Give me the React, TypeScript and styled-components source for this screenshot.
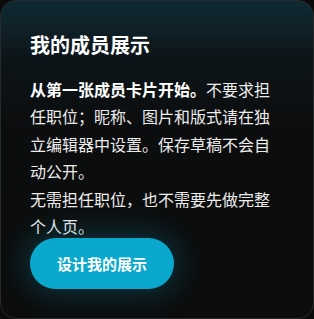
import React from "react";
import styled, { createGlobalStyle } from "styled-components";

const GlobalStyle = createGlobalStyle`
    html, body {
        margin: 0;
        padding: 0;
        background: #0b0b0b;
    }
    body {
        font-family: "Noto Sans CJK SC", "Noto Sans", sans-serif;
    }
`;

const Card = styled.section`
    box-sizing: border-box;
    width: 314px;
    height: 319px;
    padding: 29px 29px;
    border: 1px solid #262a2c;
    border-radius: 16px;
    background: linear-gradient(180deg, #0f2a33 0%, #0d1519 18%, #0c0d0e 40%, #0c0c0c 100%);
    display: flex;
    flex-direction: column;
    align-items: flex-start;
`;

const Title = styled.h2`
    margin: 0;
    font-size: 20px;
    line-height: 30px;
    font-weight: 700;
    color: #ffffff;
`;

const Body = styled.p`
    margin: 16px 0 0;
    font-size: 16px;
    line-height: 27.4px;
    color: #ececec;
`;

const Strong = styled.strong`
    font-weight: 700;
    color: #ffffff;
`;

const Button = styled.button`
    margin-top: -2px;
    width: 144px;
    height: 52px;
    border: none;
    border-radius: 26px;
    background: #0aa8cc;
    color: #ffffff;
    font-family: inherit;
    font-size: 15px;
    font-weight: 700;
    cursor: pointer;
    box-shadow: 0 0 30px 6px rgba(10, 150, 185, 0.28);
`;

const App: React.FC = () => {
    return (
        <>
            <GlobalStyle />
            <Card>
                <Title>我的成员展示</Title>
                <Body>
                    <Strong>从第一张成员卡片开始。</Strong>不要求担任职位；昵称、图片和版式请在独立编辑器中设置。保存草稿不会自动公开。
                    <br />
                    无需担任职位，也不需要先做完整个人页。
                </Body>
                <Button>设计我的展示</Button>
            </Card>
        </>
    );
};

export default App;
